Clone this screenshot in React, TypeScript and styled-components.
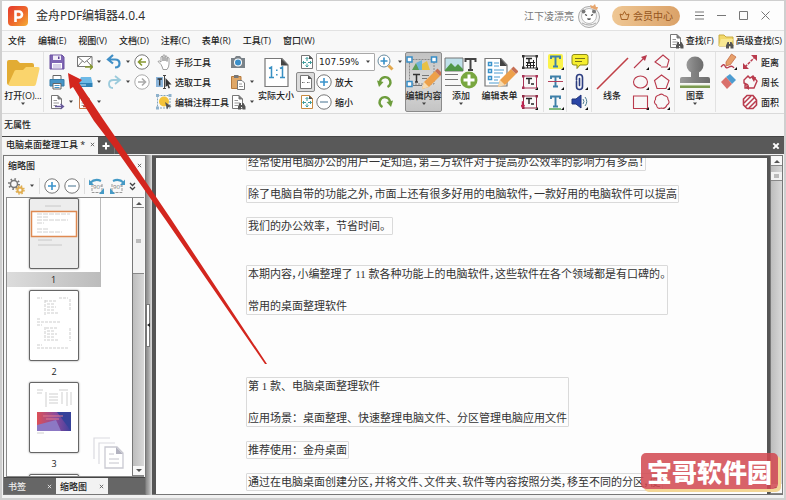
import React from "react";
import styled, { createGlobalStyle, css } from "styled-components";

const Global = createGlobalStyle`
  * { box-sizing: border-box; }
  body { margin: 0; background: #f7f7f7; font-family: "Open Sans", "Noto Sans CJK SC", sans-serif; font-size: 9px; color: #222; }
  button, select { font: inherit; color: inherit; border: 0; padding: 0; margin: 0; background: none; }
  h1, h2, p { margin: 0; font-weight: 400; }
  svg { display: block; flex: none; }
`;

/* ---------- window frame ---------- */
const Window = styled.div`
  position: relative;
  display: flex;
  flex-direction: column;
  height: 100vh;
  overflow: hidden;
  border: 1px solid #cfcfcf;
  border-left-width: 2px;
  border-right-width: 2px;
  border-bottom-width: 2px;
`;
const TitleBar = styled.header`
  display: flex;
  align-items: center;
  height: 30px;
  padding: 0 8px 0 6px;
  background: #fdfdfd;
  border-bottom: 1px solid #e2e2e2;
`;
const AppName = styled.h1`
  flex: 1;
  margin-left: 8px;
  font-size: 12px;
  line-height: 20px;
  color: #2c2c2c;
`;
const UserName = styled.span`
  font-size: 10px;
  color: #777;
  margin-right: 3px;
`;
const MemberButton = styled.button`
  display: flex;
  align-items: center;
  justify-content: center;
  gap: 3px;
  width: 68px;
  height: 20px;
  margin: 0 8px 0 11px;
  border-radius: 10px;
  background: linear-gradient(90deg, #efc794, #dba268);
  color: #94541c;
  font-size: 10px;
`;
const WindowButton = styled.button`
  display: grid;
  place-items: center;
  width: 22px;
  height: 20px;
  color: #777;
`;
const MenuBar = styled.nav`
  display: flex;
  align-items: center;
  height: 21px;
  padding: 0 2px 0 6px;
  gap: 12px;
  border-bottom: 1px solid #dedede;
  background: #f8f8f8;
`;
const MenuItem = styled.button`
  line-height: 14px;
  white-space: nowrap;
  font-weight: 500;
`;
const Find = styled(MenuItem)`
  display: flex;
  align-items: center;
  gap: 2px;
`;
const FindGroup = styled.div`
  display: flex;
  gap: 4px;
  margin-left: auto;
`;

/* ---------- ribbon ---------- */
const Ribbon = styled.div`
  display: flex;
  height: 62px;
  padding: 0 0 1px 1px;
  border-bottom: 1px solid #dadada;
  background: #f8f8f8;
`;
const Stack = styled.div<{ $w: number; $pad?: number; $line?: boolean }>`
  display: flex;
  flex-direction: column;
  flex: none;
  width: ${(p) => p.$w}px;
  padding-left: ${(p) => p.$pad ?? 0}px;
  ${(p) => p.$line && css`border-right: 1px solid #e2e2e2;`}
`;
const Tool = styled.button`
  display: flex;
  align-items: center;
  gap: 3px;
  height: 20px;
  white-space: nowrap;
  font-weight: 500;
`;
const PressedTool = styled(Tool)`
  width: 19px;
  height: 20px;
  justify-content: center;
  border: 1px solid #8a8a8a;
  border-radius: 2px;
  background: #dcdcdc;
`;
const BigTool = styled.button<{ $w: number; $line?: boolean; $on?: boolean }>`
  display: flex;
  flex-direction: column;
  flex: none;
  align-items: center;
  width: ${(p) => p.$w}px;
  height: 60px;
  padding-top: 3px;
  line-height: 12px;
  white-space: nowrap;
  font-weight: 500;
  ${(p) => p.$line && css`border-right: 1px solid #e2e2e2;`}
  ${(p) => p.$on && css`
    padding-top: 2px;
    border: 1px solid #8b8b8b;
    border-radius: 2px;
    background: linear-gradient(#c2c2c2, #dadada 50%, #c4c4c4);
  `}
`;
const BigIcon = styled.span`
  display: grid;
  place-items: center;
  height: 35px;
`;
const ZoomBox = styled.div`
  display: flex;
  align-items: center;
  width: 59px;
  height: 18px;
  margin: 1px 0;
  border: 1px solid #a9a9a9;
  border-radius: 1px;
  background: #fff;
  padding-right: 3px;
`;
const ZoomSelect = styled.select`
  flex: 1;
  min-width: 0;
  appearance: none;
  padding-left: 2px;
  font-family: "DejaVu Sans", sans-serif;
  font-size: 9px;
`;
const PropertyBar = styled.div`
  height: 22px;
  padding-left: 2px;
  line-height: 21px;
  font-weight: 500;
  background: #f6f6f6;
`;

/* ---------- document tabs ---------- */
const TabStrip = styled.div`
  display: flex;
  align-items: stretch;
  height: 18px;
  background: #595959;
  border-top: 1px solid #444;
`;
const FileTab = styled.button`
  display: flex;
  align-items: center;
  justify-content: space-between;
  width: 96px;
  padding: 0 3px 2px 4px;
  background: #f6f6f6;
  font-weight: 500;
`;
const StripButton = styled.button<{ $end?: boolean }>`
  display: grid;
  place-items: center;
  width: 17px;
  border-right: 1px solid #777;
  color: #fff;
  ${(p) => p.$end && css`margin-left: auto; border-right: 0;`}
`;

/* ---------- body ---------- */
const Body = styled.main`
  display: flex;
  flex: 1;
  min-height: 0;
  padding: 1px 1px 3px 1px;
  background: #f1f1f1;
`;
const SidePanel = styled.aside`
  display: flex;
  flex-direction: column;
  width: 143px;
  border: 1px solid #777;
  background: #f8f8f8;
`;
const PanelHead = styled.div`
  display: flex;
  align-items: center;
  justify-content: space-between;
  height: 19px;
  padding: 0 3px 0 4px;
`;
const PanelTitle = styled.h2`
  font-size: 9px;
  font-weight: 500;
`;
const PanelTools = styled.div`
  display: flex;
  align-items: center;
  height: 22px;
  padding: 0 2px 0 4px;
  gap: 4px;
`;
const Rule = styled.i`
  width: 1px;
  height: 16px;
  background: #ddd;
`;
const ListRow = styled.div`
  position: relative;
  display: flex;
  flex: 1;
  min-height: 0;
  margin: 0 1px 0 2px;
  border: 1px solid #8a8a8a;
  border-right: 0;
  background: #fefefe;
`;
const ThumbList = styled.div`
  flex: 1;
  overflow: hidden;
`;
const Thumb = styled.button<{ $on?: boolean }>`
  display: flex;
  flex-direction: column;
  align-items: center;
  gap: 3px;
  width: 94px;
  height: 89px;
  margin-bottom: 3px;
  ${(p) => p.$on && css`border-right: 1px solid #bbb; border-bottom: 1px solid #bbb;`}
`;
const Sheet = styled.span<{ $on?: boolean }>`
  display: block;
  width: 50px;
  height: 71px;
  border: 1px solid #666;
  border-radius: 2px;
  box-shadow: 0 0 2px #888;
  background: ${(p) => (p.$on ? "#ededed" : "#fff")};
`;
const PageNo = styled.span<{ $on?: boolean }>`
  width: 100%;
  height: 15px;
  line-height: 15px;
  background: ${(p) => (p.$on ? "linear-gradient(90deg, #dcdcdc, #bcbcbc)" : "none")};
`;
const StackMark = styled.span`
  position: absolute;
  right: 20px;
  bottom: 7px;
`;
const ScrollTrack = styled.div`
  display: flex;
  flex-direction: column;
  width: 12px;
  border-left: 1px solid #777;
  background: linear-gradient(90deg, #bdbdbd, #d8d8d8);
`;
const ScrollButton = styled.button`
  display: grid;
  place-items: center;
  height: 10px;
  background: #f8f8f8;
  border-bottom: 1px solid #888;
`;
const ScrollThumb = styled.div<{ $h: number; $top?: number }>`
  display: grid;
  place-items: center;
  height: ${(p) => p.$h}px;
  margin-top: ${(p) => p.$top ?? 0}px;
  margin-bottom: auto;
  border-bottom: 1px solid #888;
  background: #f2f2f2;
`;
const Grip = styled.i`
  width: 5px;
  height: 4px;
  background: #bbb;
`;
const PanelTabs = styled.div`
  display: flex;
  height: 17px;
  border-top: 1px solid #444;
  background: #666;
`;
const PanelTab = styled.button<{ $on?: boolean }>`
  display: flex;
  align-items: center;
  justify-content: space-between;
  width: 52px;
  padding: 0 4px;
  font-weight: 500;
  color: ${(p) => (p.$on ? "#222" : "#eee")};
  background: ${(p) => (p.$on ? "#f2f2f2" : "none")};
`;
const Splitter = styled.div`
  display: flex;
  align-items: center;
  width: 6px;
  background: linear-gradient(90deg, #888, #aaa 50%, #ddd);
`;
const SplitHandle = styled.button`
  display: grid;
  place-items: center;
  width: 4px;
  height: 43px;
  border: 1px solid #777;
  background: #fff;
`;
const Viewer = styled.section`
  display: flex;
  flex: 1;
  min-width: 0;
  border: 1px solid #777;
  border-left: 0;
`;
const Page = styled.article`
  flex: 1;
  min-width: 0;
  overflow: hidden;
  padding-left: 90px;
  background: #fdfdfd;
  border: 3px solid #555;
  border-width: 2px 3px 0 4px;
`;
const TextBox = styled.div<{ $gap: number; $tight?: boolean }>`
  display: flex;
  flex-direction: column;
  gap: 16px;
  width: fit-content;
  margin-top: ${(p) => p.$gap}px;
  padding: 0 1px;
  border: 1px solid #dadada;
  border-radius: 1px;
  font-family: "Liberation Serif", "Noto Sans CJK SC", sans-serif;
  font-size: 11px;
  font-weight: 300;
  line-height: 16px;
  white-space: nowrap;
  color: #333;
  ${(p) => p.$tight && css`font-feature-settings: "palt";`}
`;

/* ---------- overlays ---------- */
const Pointer = styled.svg`
  position: absolute;
  left: 0;
  top: 0;
  pointer-events: none;
`;
const Stamp = styled.div`
  position: absolute;
  right: 6px;
  bottom: 9px;
  padding: 0 6px;
  border-radius: 5px;
  background: rgba(210, 72, 80, 0.86);
  box-shadow: 3px 3px 0 #f3d695;
  color: #fff;
  font-family: "Noto Sans CJK SC", sans-serif;
  font-size: 25px;
  font-weight: 900;
  line-height: 36px;
`;

/* ---------- icons ---------- */
type IconProps = { w?: number; h?: number; box?: string; children: React.ReactNode };
const Icon = ({ w = 16, h = 16, box, children }: IconProps) => (
  <svg width={w} height={h} viewBox={box ?? `0 0 ${w} ${h}`} fill="none" aria-hidden="true">
    {children}
  </svg>
);
const Caret = () => <Icon w={6} h={4}><path d="M1 0.5H5L3 3Z" fill="#444" /></Icon>;
const Cross = ({ s = 5, c = "#555", t = 1 }) => (
  <Icon w={s} h={s} box="0 0 6 6"><path d="M1 1 5 5M5 1 1 5" stroke={c} strokeWidth={t} /></Icon>
);
const Corner = () => <path d="M17 14v3h-3z" fill="#111" />;
const Logo = () => (
  <Icon w={20} h={20}>
    <defs>
      <linearGradient id="logo" x1="0" y1="0" x2="1" y2="1">
        <stop stopColor="#e5392d" /><stop offset=".55" stopColor="#ee6a2c" /><stop offset="1" stopColor="#f5ae35" />
      </linearGradient>
    </defs>
    <rect width="20" height="20" rx="4" fill="url(#logo)" />
    <path d="M7.500 16V5.500H11a3 3 0 0 1 0 6H8" stroke="#fff" strokeWidth="2.600" />
  </Icon>
);
const Avatar = () => (
  <Icon w={24} h={24}>
    <circle cx="12" cy="13" r="10.500" fill="#f3f3f3" stroke="#aaa" />
    <circle cx="12" cy="12" r="7.500" fill="#fff" stroke="#bbb" />
    <circle cx="6.500" cy="7.500" r="2" fill="#777" /><circle cx="17" cy="7.500" r="2" fill="#777" />
    <path d="M8 10.500l2 1M16 10.500l-2 1M10.500 14.500q1.500 1.500 3 0" stroke="#444" strokeWidth="1.300" />
    <path d="M5 19q7 4 14 0" stroke="#aaa" />
    <path d="M14 4l-1-3 3 1 2-2 1 3 2 0-1 3z" fill="#e7a66e" />
  </Icon>
);
const Crown = () => (
  <Icon w={11} h={11}><path d="M2.500 9.500 1 4l2.500 1L5.500 1.500 7.500 5 10 4 8.500 9.500Z" stroke="#a45f22" strokeLinejoin="round" /></Icon>
);
const Doc = ({ c = "#777" }) => (
  <><path d="M2.500 1.500H9L12.500 5V14.500H2.500Z" fill="#fff" stroke={c} /><path d="M9 1.500V5h3.500" fill={c} stroke={c} /><path d="M4.500 6.500H8M4.500 9H10M4.500 11.500H8" stroke="#999" /></>
);
const Binoculars = () => <path d="M8 15.500v-3l1.500-3.500H11v2h1V9h1.500L15.500 12.500v3h-3V13h-1.500v2.500z" fill="#555" />;
const Folder = ({ w = 34, h = 28 }) => (
  <Icon w={w} h={h} box="0 0 34 28">
    <path d="M1 3q0-2 2-2H11l3 3H26q2 0 2 2V22L3 26Q1 26 1 24Z" fill="#e2ac34" />
    <path d="M8 13q.5-2 2-2H17l3-3H32q2 0 1.500 2L30 25q-.5 2-2 2H4q-2 0-1.500-2Z" fill="#fad46c" />
  </Icon>
);
const Save = () => (
  <Icon><path d="M1 1H13L15 3V15H1Z" fill="#7f66b4" stroke="#6a519f" /><path d="M4 1.500H12V6H4Z" fill="#f1edf8" /><path d="M3 9H13V14.500H3Z" fill="#fff" /><path d="M9 2.500h1.500v2.500H9z" fill="#5c4292" /><path d="M4 11H12M4 13H12" stroke="#b3a6d3" /></Icon>
);
const Printer = () => (
  <Icon><path d="M4 5V1.500H12V5" fill="#fff" stroke="#666" /><path d="M1 5.500H15V12H1Z" fill="#4694c6" stroke="#377da9" /><path d="M4 9.500H12V15H4Z" fill="#fff" stroke="#666" /><path d="M5.500 11.500h5M5.500 13.500h5" stroke="#4694c6" /></Icon>
);
const Export = ({ c = "#67589a", e = "#777" }) => (
  <Icon><Doc c={e} /><path d="M6 12.500H14M11.500 10l3 2.500-3 2.500" stroke={c} strokeWidth="1.300" /></Icon>
);
const Mail = () => (
  <Icon><path d="M.5 2.500H15V12.500H.5Z" fill="#fff" stroke="#777" /><path d="M.5 2.500 7.500 8.500 15 2.500M.5 12.500 5.500 7M15 12.500 10 7" stroke="#777" /><path d="M8 13H15M13 10.500l2.500 2.500L13 15.500" stroke="#86982f" strokeWidth="1.300" /></Icon>
);
const Scanner = () => (
  <Icon><path d="M4 3H14L15.500 9H1Z" fill="#6db9e6" /><path d="M1 9H15.500V13H1Z" fill="#2f83b9" /><path d="M3 11h6" stroke="#cdeafa" /></Icon>
);
const Undo = () => <Icon><path d="M7 1 2 5.500l5 4M2.500 5.500H9q4.500 0 4.500 4t-4.500 4" stroke="#408fc6" strokeWidth="2.200" /></Icon>;
const Redo = () => <Icon><path d="M9 2l5 4-5 4M13 6H7.500Q3 6 3 10t4 4" stroke="#9ccbdc" strokeWidth="1.800" /></Icon>;
const Round = ({ kind }: { kind: "back" | "next" | "plus" | "minus" }) => {
  const tone = kind === "back" ? "#86982f" : kind === "next" ? "#aaa" : kind === "plus" ? "#3c94cc" : "#8ba7ba";
  const d = { back: "M12 8H4.500M8 4.500 4.500 8 8 11.500", next: "M4 8H11.500M8 4.500 11.500 8 8 11.500", plus: "M4 8H12M8 4V12", minus: "M4 8H12" }[kind];
  return <Icon><circle cx="8" cy="8" r="7.200" fill="#fff" stroke={kind === "next" ? "#aaa" : "#787878"} /><path d={d} stroke={tone} strokeWidth="1.600" /></Icon>;
};
const Hand = () => (
  <Icon><path d="M5 10.500 2 7.500q1-1.500 3 .5V3q1-1.500 2 0V7 1.500q1-1.500 2 0V7 2.500q1-1.500 2 0V7.500 4q1.200-1.200 2 0v6q0 3-2 5.500H7Q6.500 13 5 10.500Z" fill="#fff" stroke="#888" strokeWidth=".8" /></Icon>
);
const SelectTool = () => (
  <Icon><path d="M0 3H7V13H0Z" fill="#8ab4da" /><path d="M1.500 5H6M3.700 5V11.500" stroke="#333" strokeWidth="1.300" /><path d="M8.500 1.500V14.500M7 1.500h3M7 14.500h3" stroke="#444" /><path d="M9.500 4 15.500 10.500H12.500L14 14 12.500 14.500 11.500 11.500 9.500 13Z" fill="#333" /></Icon>
);
const NoteTool = () => (
  <Icon><path d="M1.500 1.500H14V14H1.500Z" stroke="#83a5bb" strokeDasharray="2 1" /><circle cx="8" cy="7.500" r="5" fill="#f3c33a" /><path d="M0 0h3v3H0zM12.500 0h3v3h-3zM0 12.500h3v3H0z" fill="#8fb2cc" /><path d="M9 8 15.500 12.500 12.500 13 11 15.500Z" fill="#555" /></Icon>
);
const Camera = () => (
  <Icon><path d="M1 4H4.500L6 2H10L11.500 4H15V14H1Z" fill="#7a8288" /><circle cx="8" cy="8.500" r="4" fill="#fff" /><circle cx="8" cy="8.500" r="3" fill="#3b8fc9" /></Icon>
);
const Clipboard = () => (
  <Icon><path d="M1.500 2.500H11V14.500H1.500Z" fill="#dfa767" stroke="#b5793c" /><path d="M4 1H8.500V4H4Z" fill="#777" /><path d="M7.500 6.500H12L14.500 9V15.500H7.500Z" fill="#fff" stroke="#777" /><path d="M9 10h3M9 12.500h4" stroke="#999" /></Icon>
);
const ActualSize = () => (
  <Icon w={25} h={31}>
    <path d="M1 1.500H18L24 8V29.500H1Z" fill="#fff" stroke="#777" strokeWidth="1.200" /><path d="M17 1.500V8.500H24Z" fill="#444" />
    <path d="M5 11.500 7.500 10V20M5 20.500H10M16 11.500 18.500 10V20M16 20.500H21M12.800 12.500v1.500M12.800 17v1.500" stroke="#3990c3" strokeWidth="1.500" />
  </Icon>
);
const Fit = ({ c = "#777", small = false }) => (
  <Icon w={14} h={16}><path d="M1.500 1.500H9.500L12.500 4.500V14.500H1.500Z" fill="#fff" stroke={c} /><path d="M9 1.500V5h4z" fill="#555" />
    {small ? <path d="M3 8.500H6M8 8.500H11" stroke="#666" strokeDasharray="1.500 1" /> : <path d="M7 3.500V7M5.500 5 7 3.500 8.500 5M7 9.500V13M5.500 11.500 7 13l1.500-1.500M3 8.500H6M8 8.500H11.500M4 7 2.500 8.500 4 10M10 7l1.500 1.500L10 10" stroke="#3d9c9c" />}
  </Icon>
);
const Magnifier = () => (
  <Icon w={17} h={17}><path d="m11.500 11.500 4 4" stroke="#e3a84e" strokeWidth="3" /><circle cx="7" cy="7" r="6" fill="#fff" stroke="#6a8b9e" /><path d="M3.500 7H10.500M7 3.500V10.500" stroke="#3690c7" strokeWidth="1.600" /></Icon>
);
const Rotate = ({ flip = false }) => (
  <Icon><g transform={flip ? "translate(16 0) scale(-1 1)" : undefined}><path d="M3 8.500A5.200 5.200 0 1 1 10.500 13" stroke="#6e9d3d" strokeWidth="2.500" /><path d="M0 6.500 6.500 8 2 13Z" fill="#6e9d3d" /></g></Icon>
);
const Pencil = () => <><path d="m18 24 11-11 5 5-11 11-7 2z" fill="#eda04a" /><path d="m29 13 2.500-2.500 5 5L34 18z" fill="#c66f54" /><path d="m18 24-2 7 7-2z" fill="#f6dbb2" /></>;
const EditContent = () => (
  <Icon w={35} h={34}>
    <path d="M3.500 3.500H28V28H3.500Z" stroke="#888" strokeDasharray="2 1" />
    <path d="M6 14 10 7l4 7z" fill="#5b9c57" /><path d="m10 7 6-3v10h-3z" fill="#6db4d7" /><path d="m16 8 5-3 3 9h-8z" fill="#e8c143" />
    <path d="M7 18.500H14M10.500 18.500V26M9 26h3" stroke="#333" strokeWidth="1.500" /><path d="M16 19.500h7M16 22.500h5M7 29.500h9" stroke="#777" />
    <path d="M1 1h5v5H1zM25.500 1h5v5h-5zM1 25.500h5v5H1z" fill="#fff" stroke="#378dc6" strokeWidth="1.500" />
    <g transform="translate(0 2)"><Pencil /></g>
  </Icon>
);
const AddContent = () => (
  <Icon w={34} h={34}>
    <path d="M1 2H19V15H1Z" fill="#bfe0ea" stroke="#777" /><path d="m1 14 6-7 4 4 3-3 5 5v2H1z" fill="#4f9748" /><path d="M21.500 6V3H31.500V6M26.500 3V14M24 14H29" stroke="#444" strokeWidth="2" />
    <path d="M1 18.500H14M1 23.500H14M1 29.500H17" stroke="#777" /><circle cx="25" cy="24" r="8.500" fill="#79a740" /><path d="M19.500 24H30.500M25 18.500V29.500" stroke="#fff" strokeWidth="3" />
  </Icon>
);
const EditForm = () => (
  <Icon w={36} h={34}>
    <path d="M3 2.500H19L25 9V30H3Z" fill="#fff" stroke="#777" strokeWidth="1.200" /><path d="M18 2v8h7z" fill="#444" />
    <path d="M6.500 6.500h3v3h-3zM6.500 13.500h3v3h-3zM6.500 20.500h3v3h-3z" stroke="#3a93cc" strokeWidth="1.500" /><path d="M12 7h5M12 10h5M12 14h10M12 17h9M12 21h6M12 24h4M7 27h12" stroke="#4d9cd0" /><Pencil />
  </Icon>
);
const Frame = ({ c = "#333", arrow = false, table = false }) => (
  <Icon w={18} h={18}>
    <path d="M2.500 3H15.500V15H2.500Z" stroke={c} /><path d="M1 2h2.500v2.500H1zM14.500 2H17v2.500h-2.500zM1 13.500h2.500V16H1z" fill={c} />
    <path d="M5 5.500H11M8 5.500V11" stroke="#222" strokeWidth="1.400" />
    {table && <path d="M5 9.500H14M5 12.500H14M6.500 9V15M9.500 9v6M12.500 7v8" stroke="#222" />}
    {!table && <path d="M10 11h3" stroke="#222" strokeWidth="1.500" />}
    {arrow && <path d="M3 9H1.500V14M0 12l1.500 2.500L3.500 12" stroke="#c32653" strokeWidth="1.400" />}
    <Corner />
  </Icon>
);
const Letter = ({ kind }: { kind: "mark" | "strike" | "under" }) => (
  <Icon w={18} h={18}>
    {kind === "mark" && <rect x="1" y="1" width="15" height="15" rx="2" fill="#fbf34b" />}
    <path d="M4 6V3.500H13V6M8.500 3.500V13M6 13.500H11" stroke="#3d7fa8" strokeWidth="1.900" />
    {kind === "strike" && <path d="M1 8.500H16" stroke="#b4405a" />}
    {kind === "under" && <path d="M2 16H14" stroke="#57a654" strokeWidth="1.500" />}
    <Corner />
  </Icon>
);
const Comment = () => <Icon w={18} h={18}><path d="M3 1.500H15Q17 1.500 17 3.500V10Q17 12 15 12H9L6 15.500V12H3Q1 12 1 10V3.500Q1 1.500 3 1.500Z" fill="#f6ee2e" stroke="#8d8917" /><path d="M4 5.500H14M4 8.500H11" stroke="#77731a" /><Corner /></Icon>;
const Clip = () => <Icon w={18} h={18}><path d="M5.500 7V4.500Q5.500 1.500 8.500 1.500T11.500 4.500V13.500Q11.500 16.500 8.500 16.500T5.500 13.500V8.500M8.500 5.500V12.500" stroke="#2c3d80" strokeWidth="1.600" strokeLinecap="round" /><Corner /></Icon>;
const Speaker = () => <Icon w={18} h={18}><path d="M1 6H5L10 2V15L5 11H1Z" fill="#2b46a7" stroke="#1f3277" /><path d="M12 6q2 2.500 0 5M14 4q3.500 4.500 0 9" stroke="#4b7a91" /><Corner /></Icon>;
const RED = "#b93b4d";
const Shape = ({ d, head }: { d: string; head?: string }) => <Icon w={18} h={18}><path d={d} stroke={RED} strokeWidth="1.100" />{head && <path d={head} fill={RED} />}<Corner /></Icon>;
const StampIcon = () => (
  <Icon w={32} h={33}>
    <defs><linearGradient id="st"><stop stopColor="#999" /><stop offset=".5" stopColor="#808080" /><stop offset="1" stopColor="#6c6c6c" /></linearGradient></defs>
    <circle cx="16" cy="9" r="8.500" fill="url(#st)" /><path d="M12 15H20V21H29Q31 21 31 23V27H1V23Q1 21 3 21H12Z" fill="url(#st)" /><path d="M1 29H31V32H1Z" fill="#7b9a50" /><path d="M1 29H31" stroke="#e9efdd" />
  </Icon>
);
const PencilDraw = () => <Icon w={18} h={18}><path d="M6 9 11.500 1 16 4 10.500 11.500 6 13Z" fill="#e7a06b" stroke="#c46f47" strokeWidth=".8" /><path d="M1 14q3-4 4-1t4 1 5 1" stroke={RED} strokeWidth="1.300" /><Corner /></Icon>;
const Eraser = () => <Icon w={18} h={18}><path d="m6 4 4-3 6 6-4 4z" fill="#4e9cd0" /><path d="m6 4 6 7-5 5-6-7z" fill="#d9706b" /></Icon>;
const Distance = () => <Icon><path d="M3 13 13 3" stroke={RED} strokeWidth="1.500" strokeDasharray="3 1" /><path d="M15 1v6L9 1zM1 15V9l6 6z" fill={RED} /></Icon>;
const Perimeter = () => <Icon><path d="M2 6 6 2 8 4 11 2 15 7 12 14H3V11H6L2 9Z" stroke={RED} strokeWidth="1.400" /><path d="M9 3l5 0-2 5zM7 11v5l-4-3z" fill={RED} /></Icon>;
const Area = () => <Icon><path d="M5 1.500H11L14.500 6V11L11 14.500H5L1.500 11V5Z" stroke={RED} strokeWidth="1.600" /><path d="M2 9 9 2M3 13 13 3M7 14l7-7" stroke={RED} strokeWidth="1.500" /></Icon>;
const Gears = () => (
  <Icon w={18} h={17}><circle cx="6" cy="6" r="3.500" stroke="#777" strokeWidth="1.500" /><circle cx="6" cy="6" r="5" stroke="#777" strokeWidth="2" strokeDasharray="1.500 2.400" /><circle cx="12" cy="12" r="2.500" stroke="#e1ae51" strokeWidth="2" /><circle cx="12" cy="12" r="4" stroke="#e1ae51" strokeWidth="1.500" strokeDasharray="1.500 1.700" /></Icon>
);
const Turn = ({ flip = false }) => (
  <Icon w={16} h={16}>
    <path d="M3 6V14.500H13V5" stroke="#999" strokeDasharray="3 1" />
    <g transform={flip ? "translate(16 0) scale(-1 1)" : undefined}><path d="M1 5Q6 0 12 3" stroke="#459ac6" strokeWidth="2" /><path d="M0 1.500V7H5Z" fill="#459ac6" /><path d="M10 16h5V10z" fill="#459ac6" /></g>
    <text x="4" y="11" fontSize="6" fill="#777">90°</text>
  </Icon>
);
const SheetArt = ({ n }: { n: number }) => (
  <Icon w={48} h={69}>
    {n === 1 && <><path d="M15 7H31M8 41H22M8 46H32" stroke="#c8c8c8" /><rect x="1.500" y="12.500" width="45" height="25" fill="#fff" stroke="#df8a52" strokeWidth="1.500" /><path d="M7 15H40M7 18H18M7 21H38M7 24H14M7 30H18M7 33H32" stroke="#d0d0d0" strokeDasharray="5 1" /></>}
    {n === 2 && <path d="M7 7H12M29 7H38M15 9V24M15 10H27M17 13H25M17 16H26M17 19H24M17 22H28M40 8V20M7 28H11M7 31H30M7 34H12M15 36V50M16 37H28M17 40H25M17 43H27M17 46H24M17 49H28M40 37V50M7 54H12M7 57H38" stroke="#cdcdcd" strokeDasharray="3 1" />}
    {n === 3 && <><path d="M7 7H13M7 10H12M29 7H38M16 9V24M19 11H28M19 14H28M19 17H28M19 20H28M32 9V21M37 9V23M41 9V22M7 50H14" stroke="#cfcfcf" /><defs><linearGradient id="art"><stop stopColor="#dd5057" /><stop offset=".55" stopColor="#8c4b9c" /><stop offset="1" stopColor="#3c409e" /></linearGradient></defs><rect x="7" y="29" width="34" height="19" fill="url(#art)" /><path d="M7 48V42L26 37 31 48Z" fill="#8c78c4" /><path d="m27 29 14 19V29z" fill="#36429a" /><path d="M13 33H33M16 36H29" stroke="#e07a8c" /></>}
  </Icon>
);
const Pages = () => (
  <Icon w={31} h={32}><path d="M1 22V1H17M6 27V6H22" stroke="#dadadf" strokeWidth="1.200" /><path d="M12 10H24L30 16V31H12Z" fill="#fff" stroke="#c9c9d1" strokeWidth="1.300" /><path d="M23 10v7h7z" fill="#b2b2bf" /><path d="M16 17h5M16 22h10M16 26h10" stroke="#c4c4cc" /></Icon>
);
const Tri = ({ down = false }) => <Icon w={6} h={4}><path d={down ? "M0 0H6L3 3Z" : "M0 4H6L3 1Z"} fill="#555" /></Icon>;

const menus = ["文件", "编辑(E)", "视图(V)", "文档(D)", "注释(C)", "表单(R)", "工具(T)", "窗口(W)"];
const paragraphs: { gap: number; tight?: boolean; lines: string[] }[] = [
  { gap: -5, tight: true, lines: ["经常使用电脑办公的用户一定知道，第三方软件对于提高办公效率的影响力有多高！"] },
  { gap: 14, tight: true, lines: ["除了电脑自带的功能之外，市面上还有很多好用的电脑软件，一款好用的电脑软件可以提高"] },
  { gap: 14, lines: ["我们的办公效率，节省时间。"] },
  { gap: 30, tight: true, lines: ["本期内容，小编整理了 11 款各种功能上的电脑软件，这些软件在各个领域都是有口碑的。", "常用的桌面整理软件"] },
  { gap: 62, lines: ["第 1 款、电脑桌面整理软件", "应用场景：桌面整理、快速整理电脑文件、分区管理电脑应用文件"] },
  { gap: 14, lines: ["推荐使用：金舟桌面"] },
  { gap: 14, tight: true, lines: ["通过在电脑桌面创建分区，并将文件、文件夹、软件等内容按照分类，移至不同的分区，便"] },
];

export default function App() {
  return (
    <>
      <Global />
      <Window>
        <TitleBar>
          <Logo />
          <AppName>金舟PDF编辑器4.0.4</AppName>
          <UserName>江下凌漂亮</UserName>
          <Avatar />
          <MemberButton><Crown />会员中心</MemberButton>
          <WindowButton aria-label="菜单"><Icon w={9} h={9}><path d="M0 1H9M0 4.500H9M0 8H9" stroke="currentColor" /></Icon></WindowButton>
          <WindowButton aria-label="最小化"><Icon w={9} h={9}><path d="M0 4.500H9" stroke="currentColor" /></Icon></WindowButton>
          <WindowButton aria-label="最大化"><Icon w={9} h={9}><path d="M.5.5h8v8h-8z" stroke="currentColor" /></Icon></WindowButton>
          <WindowButton aria-label="关闭"><Icon w={9} h={9}><path d="m.5.5 8 8m0-8-8 8" stroke="currentColor" /></Icon></WindowButton>
        </TitleBar>
        <MenuBar>
          {menus.map((m) => <MenuItem key={m}>{m}</MenuItem>)}
          <FindGroup>
            <Find><Icon><Doc /><Binoculars /></Icon>查找(F)</Find>
            <Find><Icon><path d="M1 2H6L8 4H15V13H1Z" fill="#f2d86a" stroke="#c8ab42" /><path d="M3 6H15L13 13H1Z" fill="#f8e892" /><Binoculars /></Icon>高级查找(S)</Find>
          </FindGroup>
        </MenuBar>
        <Ribbon>
          <BigTool $w={41} $line><BigIcon><Folder /></BigIcon>打开(O)...<Caret /></BigTool>
          <Stack $w={32} $pad={5}>
            <Tool aria-label="保存"><Save /></Tool>
            <Tool aria-label="打印"><Printer /></Tool>
            <Tool aria-label="导出"><Export /><Caret /></Tool>
          </Stack>
          <Stack $w={29} $pad={1}>
            <Tool aria-label="邮件"><Mail /><Caret /></Tool>
            <Tool aria-label="扫描"><Scanner /><Caret /></Tool>
            <Tool aria-label="转换"><Export c="#c34b36" e="#c7794a" /><Caret /></Tool>
          </Stack>
          <Stack $w={29} $pad={1}>
            <Tool aria-label="撤销"><Undo /><Caret /></Tool>
            <Tool aria-label="重做"><Redo /><Caret /></Tool>
          </Stack>
          <Stack $w={22}>
            <Tool aria-label="后退"><Round kind="back" /></Tool>
            <Tool aria-label="前进"><Round kind="next" /></Tool>
          </Stack>
          <Stack $w={73}>
            <Tool><Hand />手形工具</Tool>
            <Tool><SelectTool />选取工具</Tool>
            <Tool><NoteTool />编辑注释工具</Tool>
          </Stack>
          <Stack $w={28} $pad={1}>
            <Tool aria-label="快照"><Camera /></Tool>
            <Tool aria-label="粘贴"><Clipboard /><Caret /></Tool>
            <Tool aria-label="查找"><Icon><Doc /><Binoculars /></Icon><Caret /></Tool>
          </Stack>
          <BigTool $w={38}><BigIcon><ActualSize /></BigIcon>实际大小</BigTool>
          <Stack $w={21} $pad={1}>
            <Tool aria-label="适合页面"><Icon w={1} h={1}>{null}</Icon><Fit /></Tool>
            <PressedTool aria-label="适合宽度"><Fit small /></PressedTool>
            <Tool aria-label="适合内容"><Icon w={1} h={1}>{null}</Icon><Fit c="#c78a3f" /></Tool>
          </Stack>
          <Stack $w={61}>
            <ZoomBox><ZoomSelect aria-label="缩放比例"><option>107.59%</option></ZoomSelect><Caret /></ZoomBox>
            <Tool><Round kind="plus" />放大</Tool>
            <Tool><Round kind="minus" />缩小</Tool>
          </Stack>
          <Stack $w={28}>
            <Tool aria-label="放大镜"><Magnifier /><Caret /></Tool>
            <Tool aria-label="向左旋转"><Rotate /></Tool>
            <Tool aria-label="向右旋转"><Rotate flip /></Tool>
          </Stack>
          <BigTool $w={37} $on><BigIcon><EditContent /></BigIcon>编辑内容<Caret /></BigTool>
          <BigTool $w={38}><BigIcon><AddContent /></BigIcon>添加<Caret /></BigTool>
          <BigTool $w={39}><BigIcon><EditForm /></BigIcon>编辑表单</BigTool>
          <Stack $w={25} $pad={2} $line>
            <Tool aria-label="文本域"><Frame table /></Tool>
            <Tool aria-label="文本框"><Frame c="#a83255" /></Tool>
            <Tool aria-label="标注框"><Frame c="#8f2a45" arrow /></Tool>
          </Stack>
          <Stack $w={23} $pad={3} $line>
            <Tool aria-label="高亮"><Letter kind="mark" /></Tool>
            <Tool aria-label="删除线"><Letter kind="strike" /></Tool>
            <Tool aria-label="下划线"><Letter kind="under" /></Tool>
          </Stack>
          <Stack $w={25} $pad={4} $line>
            <Tool aria-label="批注"><Comment /></Tool>
            <Tool aria-label="附件"><Clip /></Tool>
            <Tool aria-label="声音"><Speaker /></Tool>
          </Stack>
          <BigTool $w={40}><BigIcon><Icon w={33} h={34}><path d="M1 33 32 2" stroke="#c04047" strokeWidth="1.600" /></Icon></BigIcon>线条</BigTool>
          <Stack $w={21}>
            <Tool aria-label="箭头"><Shape d="M2 15 13 4" head="M15 2l-2 6-4-4z" /></Tool>
            <Tool aria-label="椭圆"><Shape d="M1.500 9a7 6 0 1 1 14 0a7 6 0 1 1-14 0" /></Tool>
            <Tool aria-label="矩形"><Shape d="M1.500 3H15.500V15.500H1.500Z" /></Tool>
          </Stack>
          <Stack $w={22} $line>
            <Tool aria-label="折线"><Shape d="M8 13 2 9 10 2 16 7 14 14H8" /></Tool>
            <Tool aria-label="多边形"><Shape d="M8.500 2 16 7.500 13 15.500H4L1.500 7.500Z" /></Tool>
            <Tool aria-label="云形"><Shape d="M6 2Q9 0 11 2.500 15 3 15 6.500 17.500 10 14 12 12 16.500 8.500 15 4 16.500 3.500 12 0 9.500 2.500 6.500 2 3 6 2Z" /></Tool>
          </Stack>
          <BigTool $w={41} $line><BigIcon><StampIcon /></BigIcon>图章<Caret /></BigTool>
          <Stack $w={24} $pad={4}>
            <Tool aria-label="铅笔"><PencilDraw /></Tool>
            <Tool aria-label="橡皮"><Eraser /></Tool>
          </Stack>
          <Stack $w={42} $pad={2}>
            <Tool><Distance />距离</Tool>
            <Tool><Perimeter />周长</Tool>
            <Tool><Area />面积</Tool>
          </Stack>
        </Ribbon>
        <PropertyBar>无属性</PropertyBar>
        <TabStrip>
          <FileTab>电脑桌面整理工具 *<Cross /></FileTab>
          <StripButton aria-label="新建标签"><Icon w={8} h={8}><path d="M4 .5V7.500M.5 4H7.500" stroke="#fff" strokeWidth="2" /></Icon></StripButton>
          <StripButton $end aria-label="关闭文档"><Cross s={8} c="#fff" t={1.5} /></StripButton>
        </TabStrip>
        <Body>
          <SidePanel>
            <PanelHead><PanelTitle>缩略图</PanelTitle><button aria-label="关闭面板"><Cross /></button></PanelHead>
            <PanelTools>
              <Tool aria-label="选项"><Gears /><Caret /></Tool>
              <Rule />
              <button aria-label="放大缩略图"><Round kind="plus" /></button>
              <button aria-label="缩小缩略图"><Round kind="minus" /></button>
              <Rule />
              <button aria-label="左转"><Turn /></button>
              <button aria-label="右转"><Turn flip /></button>
              <button aria-label="更多"><Icon w={7} h={9}><path d="M1 1l2.500 2.500L6 1M1 5l2.500 2.500L6 5" stroke="#444" strokeWidth="1.300" /></Icon></button>
            </PanelTools>
            <ListRow>
              <ThumbList>
                {[1, 2, 3].map((n) => (
                  <Thumb key={n} $on={n === 1}>
                    <Sheet $on={n === 1}><SheetArt n={n} /></Sheet>
                    <PageNo $on={n === 1}>{n}</PageNo>
                  </Thumb>
                ))}
                <Thumb aria-label="下一页"><Sheet /></Thumb>
              </ThumbList>
              <StackMark><Pages /></StackMark>
              <ScrollTrack>
                <ScrollButton aria-label="向上"><Tri /></ScrollButton>
                <ScrollThumb $h={66}><Grip /></ScrollThumb>
                <ScrollButton aria-label="向下"><Tri down /></ScrollButton>
              </ScrollTrack>
            </ListRow>
            <PanelTabs>
              <PanelTab>书签<Cross c="#eee" /></PanelTab>
              <PanelTab $on>缩略图<Cross /></PanelTab>
            </PanelTabs>
          </SidePanel>
          <Splitter><SplitHandle aria-label="折叠面板"><Icon w={3} h={4}><path d="M3 0V4L0 2Z" fill="#222" /></Icon></SplitHandle></Splitter>
          <Viewer>
            <Page>
              {paragraphs.map((p) => (
                <TextBox key={p.lines[0]} $gap={p.gap} $tight={p.tight}>
                  {p.lines.map((l) => <p key={l}>{l}</p>)}
                </TextBox>
              ))}
            </Page>
            <ScrollTrack>
              <ScrollButton aria-label="向上滚动"><Tri /></ScrollButton>
              <ScrollThumb $h={9} $top={6}><Grip /></ScrollThumb>
              <ScrollButton aria-label="向下滚动"><Tri down /></ScrollButton>
            </ScrollTrack>
          </Viewer>
        </Body>
        <Pointer width="270" height="370" viewBox="2 1 270 370" aria-hidden="true">
          <path d="M68 73 82 80 79 83 103 119 125 151 171 219 267 364 265 364 165 219 117 151 94 121 73 87 70 89Z" fill="#d3261e" />
        </Pointer>
        <Stamp>宝哥软件园</Stamp>
      </Window>
    </>
  );
}
